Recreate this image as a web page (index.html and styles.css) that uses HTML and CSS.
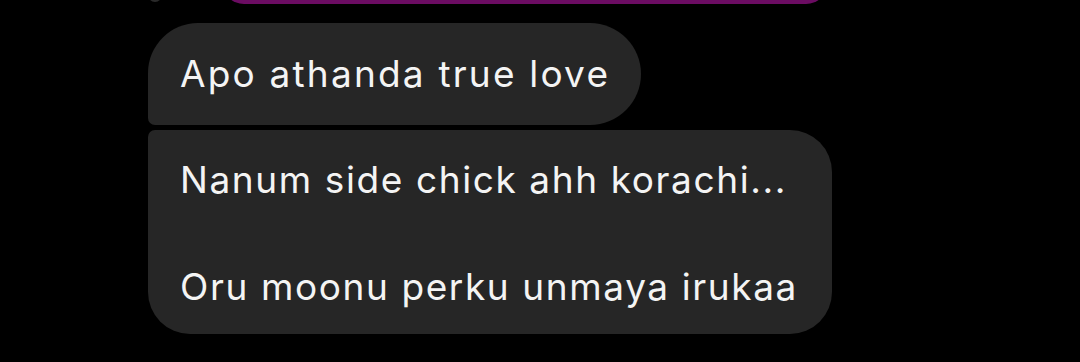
FILE: index.html
```html
<!DOCTYPE html>
<html>
<head>
<meta charset="utf-8">
<link rel="stylesheet" href="styles.css">
</head>
<body>
<div class="thread">
  <div class="prev-row">
    <div class="avatar"></div>
    <div class="prev-bubble"></div>
  </div>
  <div class="group">
    <div class="bubble first">Apo athanda true love</div>
    <div class="bubble last">Nanum side chick ahh korachi...<br><br>Oru moonu perku unmaya irukaa</div>
  </div>
</div>
</body>
</html>
```

FILE: styles.css
```css
html, body {
  margin: 0;
  padding: 0;
  background: #000;
}
body {
  width: 1080px;
  height: 362px;
  overflow: hidden;
  font-family: Inter, "Noto Sans", sans-serif;
}
.thread {
  padding-left: 148px;
}
.prev-row {
  height: 4px;
  overflow: hidden;
  display: flex;
  align-items: flex-end;
}
.avatar {
  width: 14px;
  height: 14px;
  margin-bottom: 2px;
  border-radius: 50%;
  background: #2a2a2a;
  flex: none;
}
.prev-bubble {
  margin-left: 60px;
  width: 606px;
  height: 40px;
  border-radius: 0 0 22px 22px;
  background: #6b0c62;
  flex: none;
}
.group {
  margin-top: 19px;
  display: flex;
  flex-direction: column;
  align-items: flex-start;
  gap: 5px;
}
.bubble {
  background: #262626;
  color: #f4f4f4;
  font-size: 37px;
  line-height: 53.5px;
  letter-spacing: 1.6px;
}
.first {
  letter-spacing: 2.2px;
  padding: 24px 31px 24px 32px;
  border-radius: 50px 51px 51px 7px;
}
.last {
  padding: 23px 34px 21px 32px;
  border-radius: 7px 42px 42px 42px;
}
```
